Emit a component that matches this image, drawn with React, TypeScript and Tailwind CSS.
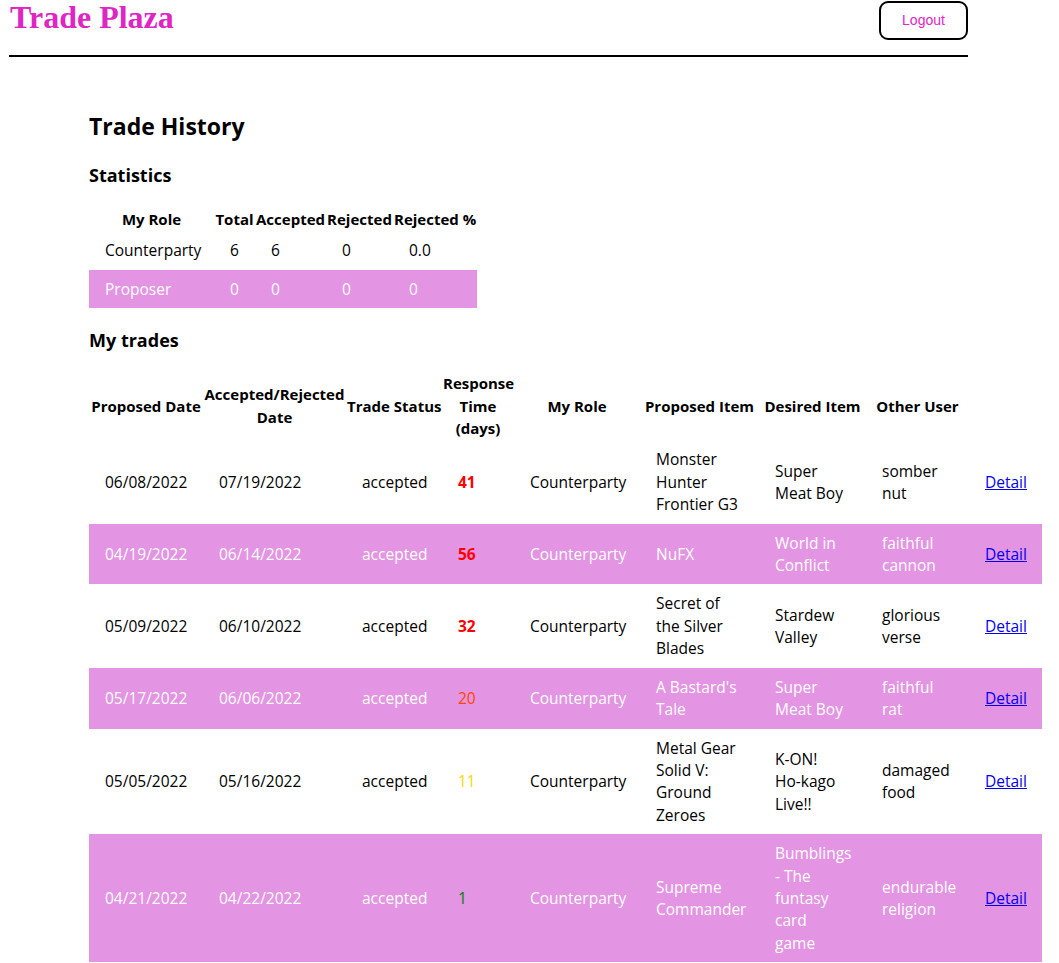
const stats = [
  { role: 'Counterparty', total: 6, accepted: 6, rejected: 0, pct: '0.0' },
  { role: 'Proposer', total: 0, accepted: 0, rejected: 0, pct: '0' },
];

type Trade = {
  proposed: string;
  decided: string;
  status: string;
  days: number;
  role: string;
  proposedItem: string;
  desiredItem: string;
  otherUser: string;
};

const trades: Trade[] = [
  { proposed: '06/08/2022', decided: '07/19/2022', status: 'accepted', days: 41, role: 'Counterparty', proposedItem: 'Monster Hunter Frontier G3', desiredItem: 'Super Meat Boy', otherUser: 'somber nut' },
  { proposed: '04/19/2022', decided: '06/14/2022', status: 'accepted', days: 56, role: 'Counterparty', proposedItem: 'NuFX', desiredItem: 'World in Conflict', otherUser: 'faithful cannon' },
  { proposed: '05/09/2022', decided: '06/10/2022', status: 'accepted', days: 32, role: 'Counterparty', proposedItem: 'Secret of the Silver Blades', desiredItem: 'Stardew Valley', otherUser: 'glorious verse' },
  { proposed: '05/17/2022', decided: '06/06/2022', status: 'accepted', days: 20, role: 'Counterparty', proposedItem: "A Bastard's Tale", desiredItem: 'Super Meat Boy', otherUser: 'faithful rat' },
  { proposed: '05/05/2022', decided: '05/16/2022', status: 'accepted', days: 11, role: 'Counterparty', proposedItem: 'Metal Gear Solid V: Ground Zeroes', desiredItem: 'K-ON! Ho-kago Live!!', otherUser: 'damaged food' },
  { proposed: '04/21/2022', decided: '04/22/2022', status: 'accepted', days: 1, role: 'Counterparty', proposedItem: 'Supreme Commander', desiredItem: 'Bumblings - The funtasy card game', otherUser: 'endurable religion' },
];

// response time colour buckets
function daysClass(d: number) {
  if (d > 28) return 'text-[#ff0000] font-bold';
  if (d > 14) return 'text-[#ff4500]';
  if (d > 7) return 'text-[#ffd700]';
  return 'text-[#008000]';
}

// keep hyphenated words together (K-ON!, Ho-kago)
function Words({ text }: { text: string }) {
  const words = text.split(' ');
  return (
    <>
      {words.map((w, i) => (
        <span key={i}>
          <span className="whitespace-nowrap">{w}</span>
          {i < words.length - 1 ? ' ' : ''}
        </span>
      ))}
    </>
  );
}

const td = 'px-4 py-2 align-middle';
const th = 'p-px font-bold text-center align-middle text-[15px]';

export default function App() {
  return (
    <div className="min-h-screen bg-white text-black font-['Open_Sans','Noto_Sans',sans-serif] text-[15.5px] leading-[22.4px]">
      {/* Header */}
      <header className="ml-[9px] w-[959px] border-b-2 border-black flex justify-between items-start h-[57px]">
        <h1 className="font-['Liberation_Serif',serif] font-bold text-[32px] leading-none text-[#e025c5] pl-px pt-[1px]">
          Trade Plaza
        </h1>
        <button className="mt-[1px] w-[89px] h-[39px] border-2 border-black rounded-[9px] bg-white text-[#e025c5] font-['Liberation_Sans',sans-serif] text-[14px]">
          Logout
        </button>
      </header>

      <main className="pl-[89px] pt-[54px]">
        <h2 className="text-[23px] leading-[30px] font-bold">Trade History</h2>

        <h3 className="mt-[22px] text-[18px] leading-[24px] font-bold">Statistics</h3>

        <table className="mt-[20px] table-fixed w-[388px]">
          <colgroup>
            <col className="w-[125px]" />
            <col className="w-[41px]" />
            <col className="w-[71px]" />
            <col className="w-[67px]" />
            <col className="w-[84px]" />
          </colgroup>
          <thead>
            <tr>
              <th className={th}>My Role</th>
              <th className={th}>Total</th>
              <th className={th}>Accepted</th>
              <th className={th}>Rejected</th>
              <th className={`${th} whitespace-nowrap`}>Rejected %</th>
            </tr>
          </thead>
          <tbody>
            {stats.map((s, i) => (
              <tr key={s.role} className={i % 2 === 1 ? 'bg-[#e394e3] text-white' : ''}>
                <td className={td}>{s.role}</td>
                <td className={td}>{s.total}</td>
                <td className={td}>{s.accepted}</td>
                <td className={td}>{s.rejected}</td>
                <td className={td}>{s.pct}</td>
              </tr>
            ))}
          </tbody>
        </table>

        <h3 className="mt-[20px] text-[18px] leading-[24px] font-bold">My trades</h3>

        <table className="mt-[19px] table-fixed w-[953px]">
          <colgroup>
            <col className="w-[114px]" />
            <col className="w-[143px]" />
            <col className="w-[96px]" />
            <col className="w-[72px]" />
            <col className="w-[126px]" />
            <col className="w-[119px]" />
            <col className="w-[107px]" />
            <col className="w-[103px]" />
            <col className="w-[73px]" />
          </colgroup>
          <thead>
            <tr>
              <th className={`${th} whitespace-nowrap`}>Proposed Date</th>
              <th className={th}>Accepted/Rejected Date</th>
              <th className={`${th} whitespace-nowrap`}>Trade Status</th>
              <th className={th}>Response Time (days)</th>
              <th className={th}>My Role</th>
              <th className={`${th} whitespace-nowrap`}>Proposed Item</th>
              <th className={`${th} whitespace-nowrap`}>Desired Item</th>
              <th className={`${th} whitespace-nowrap`}>Other User</th>
              <th className={th}></th>
            </tr>
          </thead>
          <tbody>
            {trades.map((t, i) => (
              <tr key={t.proposed} className={i % 2 === 1 ? 'bg-[#e394e3] text-white' : ''}>
                <td className={td}>{t.proposed}</td>
                <td className={td}>{t.decided}</td>
                <td className={td}>{t.status}</td>
                <td className={`${td} ${daysClass(t.days)}`}>{t.days}</td>
                <td className={`${td} whitespace-nowrap`}>{t.role}</td>
                <td className={td}>{t.proposedItem}</td>
                <td className={td}>
                  <Words text={t.desiredItem} />
                </td>
                <td className={td}>{t.otherUser}</td>
                <td className={td}>
                  <a href="#" className="text-[#0000ee] underline">Detail</a>
                </td>
              </tr>
            ))}
          </tbody>
        </table>
      </main>
    </div>
  );
}
